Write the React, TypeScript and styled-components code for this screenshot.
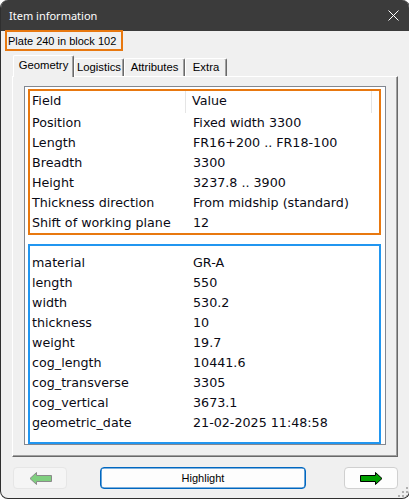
import React from "react";
import styled, { createGlobalStyle } from "styled-components";

const Global = createGlobalStyle`
  html, body { margin: 0; padding: 0; background: #ffffff; }
  body { width: 409px; height: 500px; overflow: hidden; }
`;

const ORANGE = "#e8780f";
const BLUE = "#2196f0";

const Window = styled.div`
  position: relative;
  box-sizing: border-box;
  width: 410px;
  height: 499px;
  background: #f0f0f0;
  border: 1px solid #2f2f2f;
  border-top: none;
  border-radius: 8px;
  overflow: hidden;
  display: flex;
  flex-direction: column;
`;

const TitleBar = styled.div`
  height: 31px;
  flex: none;
  background: #3b3b3b;
  display: flex;
  align-items: center;
  justify-content: space-between;
  padding: 0 10px 0 8px;
`;

const Title = styled.span`
  font-family: "Noto Sans", "Open Sans", sans-serif;
  font-size: 11px;
  color: #ffffff;
`;

const CloseIcon = styled.svg`
  width: 11px;
  height: 11px;
  display: block;
`;

const LabelBox = styled.div`
  box-sizing: border-box;
  margin: -1px 0 0 4px;
  width: 118px;
  height: 21px;
  border: 2px solid ${ORANGE};
  padding-left: 1px;
  display: flex;
  align-items: center;
  font-family: "Liberation Sans", Arial, sans-serif;
  font-size: 11px;
  color: #000;
  position: relative;
  z-index: 1;
`;

const TabStrip = styled.div`
  margin: 4px 0 0 12px;
  height: 21px;
  display: flex;
  align-items: flex-end;
  position: relative;
  z-index: 2;
`;

const Tab = styled.div<{ $w: number; $active?: boolean }>`
  box-sizing: border-box;
  width: ${(p) => p.$w}px;
  height: ${(p) => (p.$active ? 22 : 18)}px;
  margin-bottom: ${(p) => (p.$active ? -1 : 0)}px;
  background: #f0f0f0;
  border-top: 1px solid #ffffff;
  border-left: 1px solid #ffffff;
  border-right: 1px solid #696969;
  box-shadow: inset -1px 0 0 #a0a0a0;
  border-top-left-radius: 2px;
  border-top-right-radius: 2px;
  display: flex;
  justify-content: center;
  padding-top: ${(p) => (p.$active ? 3 : 2)}px;
  font-family: "Liberation Sans", Arial, sans-serif;
  font-size: 11.3px;
  color: #000;
`;

const Panel = styled.div`
  box-sizing: border-box;
  margin-left: 11px;
  width: 386px;
  height: 381px;
  border-top: 1px solid #ffffff;
  border-left: 1px solid #ffffff;
  border-right: 1px solid #696969;
  border-bottom: 1px solid #696969;
  box-shadow: inset -1px -1px 0 #a0a0a0;
  padding: 9px 0 0 11px;
`;

const ListView = styled.div`
  box-sizing: border-box;
  width: 362px;
  background: #ffffff;
  border: 1px solid #828790;
  padding: 2px 4px 0 3px;
  font-family: "DejaVu Sans", Verdana, sans-serif;
  font-size: 12.7px;
  color: #0a0a14;
`;

const Group = styled.div<{ $color: string; $pad?: string }>`
  border: 2px solid ${(p) => p.$color};
  padding: ${(p) => p.$pad ?? "0"};
  & + & {
    margin-top: 9px;
  }
`;

const HeaderRow = styled.div`
  display: flex;
  height: 22px;
`;

const HeaderCell = styled.div<{ $w?: number; $pl: number }>`
  box-sizing: border-box;
  width: ${(p) => (p.$w ? `${p.$w}px` : "auto")};
  flex: ${(p) => (p.$w ? "none" : "1")};
  padding-left: ${(p) => p.$pl}px;
  border-right: ${(p) => (p.$w ? "1px solid #e5e5e5" : "none")};
  line-height: 19px;
`;

const Row = styled.div`
  display: flex;
  height: 20px;
  line-height: 20px;
  padding-left: 2px;
  white-space: nowrap;
`;

const Key = styled.span`
  width: 161px;
  flex: none;
`;

const Val = styled.span``;

const ButtonBar = styled.div`
  margin-top: 10px;
  height: 22px;
  display: flex;
  padding: 0 11px 0 12px;
`;

const Button = styled.button<{ $variant: "disabled" | "default" | "normal"; $w: number }>`
  box-sizing: border-box;
  width: ${(p) => p.$w}px;
  height: 22px;
  padding: 0;
  margin: 0;
  border-radius: 4px;
  display: flex;
  align-items: center;
  justify-content: center;
  font-family: "Liberation Sans", Arial, sans-serif;
  font-size: 11px;
  color: #000;
  background: ${(p) => (p.$variant === "disabled" ? "#f5f5f5" : "#fdfdfd")};
  border: 1px solid
    ${(p) =>
      p.$variant === "disabled" ? "#e6e6e6" : p.$variant === "default" ? "#0067c0" : "#d0d0d0"};
  box-shadow: ${(p) => (p.$variant === "default" ? "inset 0 0 0 0.6px #0067c0" : "none")};
`;

const Grip = styled.svg`
  position: absolute;
  right: 0;
  bottom: 0;
  width: 11px;
  height: 11px;
`;

const geometry: [string, string][] = [
  ["Position", "Fixed width 3300"],
  ["Length", "FR16+200 .. FR18-100"],
  ["Breadth", "3300"],
  ["Height", "3237.8 .. 3900"],
  ["Thickness direction", "From midship (standard)"],
  ["Shift of working plane", "12"],
];

const attrs: [string, string][] = [
  ["material", "GR-A"],
  ["length", "550"],
  ["width", "530.2"],
  ["thickness", "10"],
  ["weight", "19.7"],
  ["cog_length", "10441.6"],
  ["cog_transverse", "3305"],
  ["cog_vertical", "3673.1"],
  ["geometric_date", "21-02-2025 11:48:58"],
];

const Arrow = ({ dir, fill, stroke }: { dir: "left" | "right"; fill: string; stroke: string }) => (
  <svg width="23" height="13" viewBox="0 0 23 13" style={{ display: "block" }}>
    <path
      d="M0.5 3.5 H15.5 V0.5 L22 6.5 L15.5 12.5 V9.5 H0.5 Z"
      fill={fill}
      stroke={stroke}
      strokeWidth="1"
      transform={dir === "left" ? "translate(23 0) scale(-1 1)" : undefined}
    />
  </svg>
);

export default function App() {
  return (
    <>
      <Global />
      <Window>
        <TitleBar>
          <Title>Item information</Title>
          <CloseIcon viewBox="0 0 11 11">
            <path d="M0.5 0.5 L10.5 10.5 M10.5 0.5 L0.5 10.5" stroke="#ffffff" strokeWidth="1" />
          </CloseIcon>
        </TitleBar>
        <LabelBox>Plate 240 in block 102</LabelBox>
        <TabStrip>
          <Tab $w={61} $active>Geometry</Tab>
          <Tab $w={50}>Logistics</Tab>
          <Tab $w={61}>Attributes</Tab>
          <Tab $w={42}>Extra</Tab>
        </TabStrip>
        <Panel>
          <ListView>
            <Group $color={ORANGE}>
              <HeaderRow>
                <HeaderCell $w={156} $pl={2}>Field</HeaderCell>
                <HeaderCell $w={186} $pl={6}>Value</HeaderCell>
                <HeaderCell $pl={0} />
              </HeaderRow>
              {geometry.map(([k, v]) => (
                <Row key={k}>
                  <Key>{k}</Key>
                  <Val>{v}</Val>
                </Row>
              ))}
            </Group>
            <Group $color={BLUE} $pad="7px 0 9px">
              {attrs.map(([k, v]) => (
                <Row key={k}>
                  <Key>{k}</Key>
                  <Val>{v}</Val>
                </Row>
              ))}
            </Group>
          </ListView>
        </Panel>
        <ButtonBar>
          <Button $variant="disabled" $w={54}>
            <Arrow dir="left" fill="#7fcf7f" stroke="#8a8a8a" />
          </Button>
          <Button $variant="default" $w={206} style={{ marginLeft: 33 }}>
            Highlight
          </Button>
          <Button $variant="normal" $w={54} style={{ marginLeft: "auto" }}>
            <Arrow dir="right" fill="#00a000" stroke="#000000" />
          </Button>
        </ButtonBar>
        <Grip viewBox="0 0 11 11">
          {[
            [8, 0],
            [4, 4],
            [8, 4],
            [0, 8],
            [4, 8],
            [8, 8],
          ].map(([x, y]) => (
            <rect key={`${x}-${y}`} x={x} y={y} width="2" height="2" fill="#b0b0b0" />
          ))}
        </Grip>
      </Window>
    </>
  );
}
